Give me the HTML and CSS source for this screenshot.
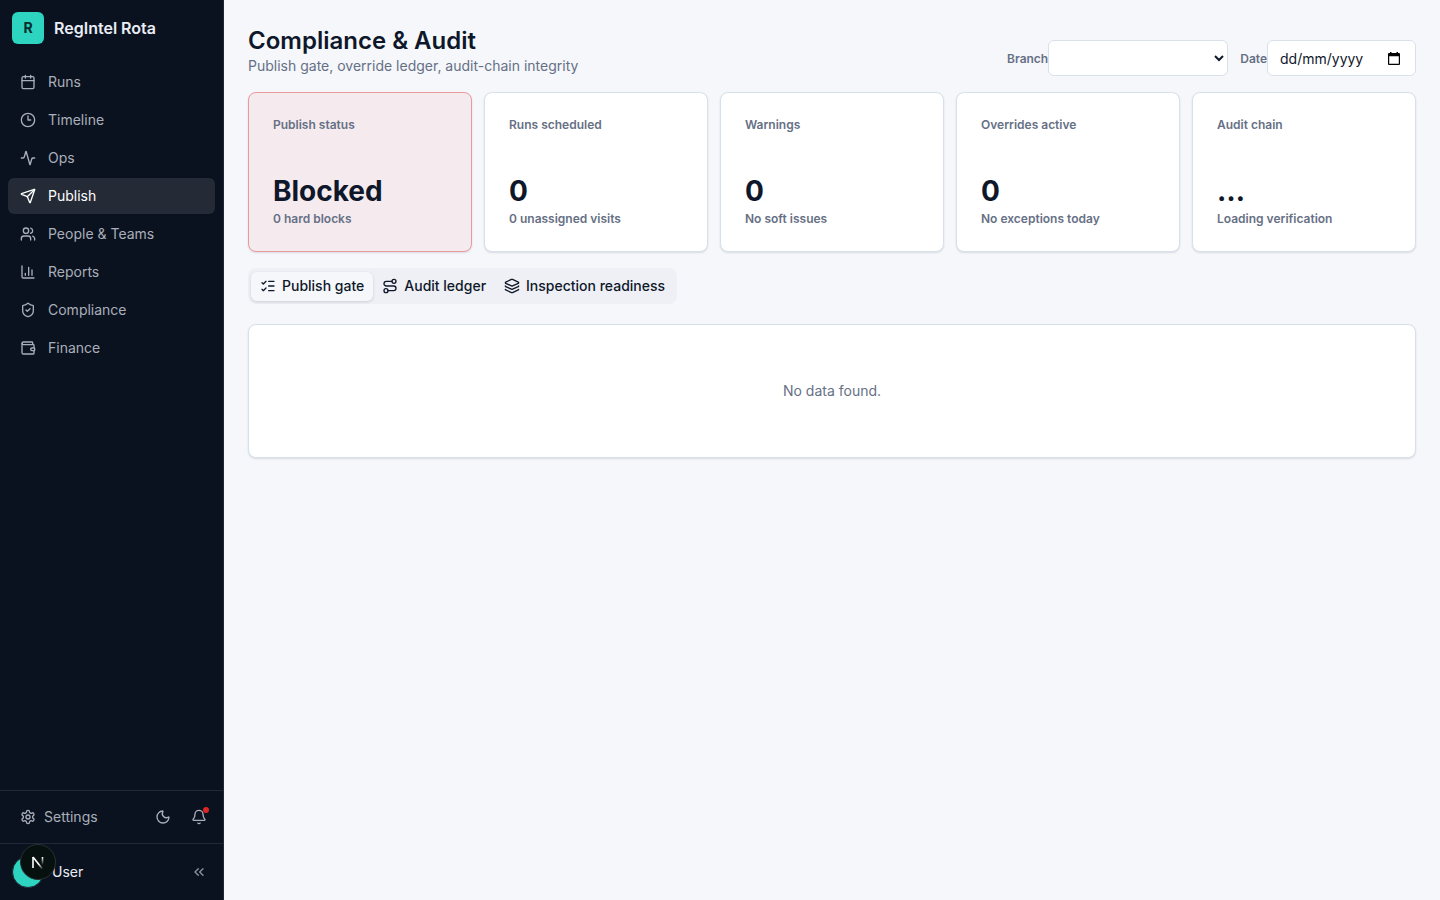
FILE: index.html
```html
<!DOCTYPE html>
<html lang="en-GB">
<head>
    <meta charset="UTF-8">
    <meta name="viewport" content="width=device-width, initial-scale=1.0">
    <title>RegIntel Rota - Compliance &amp; Audit</title>
    <link rel="stylesheet" href="styles.css">
</head>
<body>

    <div class="app">
        <aside class="sidebar">
            <div class="brand">
                <span class="brand-logo">R</span>
                <span class="brand-name">RegIntel Rota</span>
            </div>

            <nav class="nav">
                <a class="nav-item" href="#runs">
                    <svg class="icon" viewBox="0 0 24 24"><path d="M8 2v4M16 2v4"/><rect width="18" height="18" x="3" y="4" rx="2"/><path d="M3 10h18"/></svg>
                    Runs
                </a>
                <a class="nav-item" href="#timeline">
                    <svg class="icon" viewBox="0 0 24 24"><circle cx="12" cy="12" r="10"/><path d="M12 6v6h4"/></svg>
                    Timeline
                </a>
                <a class="nav-item" href="#ops">
                    <svg class="icon" viewBox="0 0 24 24"><path d="M22 12h-2.48a2 2 0 0 0-1.93 1.46l-2.35 8.36a.25.25 0 0 1-.48 0L9.24 2.18a.25.25 0 0 0-.48 0l-2.35 8.36A2 2 0 0 1 4.49 12H2"/></svg>
                    Ops
                </a>
                <a class="nav-item active" href="#publish">
                    <svg class="icon" viewBox="0 0 24 24"><path d="M14.536 21.686a.5.5 0 0 0 .937-.024l6.5-19a.496.496 0 0 0-.635-.635l-19 6.5a.5.5 0 0 0-.024.937l7.93 3.18a2 2 0 0 1 1.112 1.11z"/><path d="m21.854 2.147-10.94 10.939"/></svg>
                    Publish
                </a>
                <a class="nav-item" href="#people">
                    <svg class="icon" viewBox="0 0 24 24"><path d="M16 21v-2a4 4 0 0 0-4-4H6a4 4 0 0 0-4 4v2"/><circle cx="9" cy="7" r="4"/><path d="M22 21v-2a4 4 0 0 0-3-3.87M16 3.13a4 4 0 0 1 0 7.75"/></svg>
                    People &amp; Teams
                </a>
                <a class="nav-item" href="#reports">
                    <svg class="icon" viewBox="0 0 24 24"><path d="M3 3v16a2 2 0 0 0 2 2h16"/><path d="M18 17V9M13 17V5M8 17v-3"/></svg>
                    Reports
                </a>
                <a class="nav-item" href="#compliance">
                    <svg class="icon" viewBox="0 0 24 24"><path d="M20 13c0 5-3.5 7.5-7.66 8.95a1 1 0 0 1-.67-.01C7.5 20.5 4 18 4 13V6a1 1 0 0 1 1-1c2 0 4.5-1.2 6.24-2.72a1.17 1.17 0 0 1 1.52 0C14.51 3.81 17 5 19 5a1 1 0 0 1 1 1z"/><path d="m9 12 2 2 4-4"/></svg>
                    Compliance
                </a>
                <a class="nav-item" href="#finance">
                    <svg class="icon" viewBox="0 0 24 24"><path d="M19 7V4a1 1 0 0 0-1-1H5a2 2 0 0 0 0 4h15a1 1 0 0 1 1 1v4h-3a2 2 0 0 0 0 4h3a1 1 0 0 0 1-1v-2a1 1 0 0 0-1-1"/><path d="M3 5v14a2 2 0 0 0 2 2h15a1 1 0 0 0 1-1v-4"/></svg>
                    Finance
                </a>
            </nav>

            <div class="settings-row">
                <a class="settings-link" href="#settings">
                    <svg class="icon" viewBox="0 0 24 24"><path d="M12.22 2h-.44a2 2 0 0 0-2 2v.18a2 2 0 0 1-1 1.73l-.43.25a2 2 0 0 1-2 0l-.15-.08a2 2 0 0 0-2.73.73l-.22.38a2 2 0 0 0 .73 2.73l.15.1a2 2 0 0 1 1 1.72v.51a2 2 0 0 1-1 1.74l-.15.09a2 2 0 0 0-.73 2.73l.22.38a2 2 0 0 0 2.73.73l.15-.08a2 2 0 0 1 2 0l.43.25a2 2 0 0 1 1 1.73V20a2 2 0 0 0 2 2h.44a2 2 0 0 0 2-2v-.18a2 2 0 0 1 1-1.73l.43-.25a2 2 0 0 1 2 0l.15.08a2 2 0 0 0 2.73-.73l.22-.39a2 2 0 0 0-.73-2.73l-.15-.08a2 2 0 0 1-1-1.74v-.5a2 2 0 0 1 1-1.74l.15-.09a2 2 0 0 0 .73-2.73l-.22-.38a2 2 0 0 0-2.73-.73l-.15.08a2 2 0 0 1-2 0l-.43-.25a2 2 0 0 1-1-1.73V4a2 2 0 0 0-2-2z"/><circle cx="12" cy="12" r="3"/></svg>
                    Settings
                </a>
                <button class="icon-btn" aria-label="Toggle theme">
                    <svg class="icon" viewBox="0 0 24 24"><path d="M20.985 12.486a9 9 0 1 1-9.473-9.472c.405-.022.617.46.402.803a6 6 0 0 0 8.268 8.268c.344-.215.825-.004.803.401"/></svg>
                </button>
                <button class="icon-btn" aria-label="Notifications">
                    <svg class="icon" viewBox="0 0 24 24"><path d="M10.268 21a2 2 0 0 0 3.464 0"/><path d="M3.262 15.326A1 1 0 0 0 4 17h16a1 1 0 0 0 .74-1.673C19.41 13.956 18 12.499 18 8A6 6 0 0 0 6 8c0 4.499-1.411 5.956-2.738 7.326"/></svg>
                    <span class="dot"></span>
                </button>
            </div>

            <div class="user-row">
                <span class="avatar"></span>
                <span class="user-name">User</span>
                <button class="icon-btn dim" aria-label="Collapse sidebar">
                    <svg class="icon" viewBox="0 0 24 24"><path d="m11 17-5-5 5-5M18 17l-5-5 5-5"/></svg>
                </button>
                <button class="dev-badge" aria-label="Open dev tools">
                    <svg width="34" height="34" viewBox="0 0 34 34" fill="none">
                        <defs>
                            <linearGradient id="diag" x1="18" y1="19" x2="22" y2="24" gradientUnits="userSpaceOnUse">
                                <stop stop-color="#fff"/>
                                <stop offset="1" stop-color="#fff" stop-opacity="0"/>
                            </linearGradient>
                            <linearGradient id="stem" x1="21" y1="12" x2="21" y2="20" gradientUnits="userSpaceOnUse">
                                <stop stop-color="#fff"/>
                                <stop offset="1" stop-color="#fff" stop-opacity="0"/>
                            </linearGradient>
                        </defs>
                        <path d="M12 12l9.500 12" stroke="url(#diag)" stroke-width="1.6"/>
                        <path d="M12 23V12" stroke="#fff" stroke-width="1.6"/>
                        <path d="M21.500 12v8" stroke="url(#stem)" stroke-width="1.6"/>
                    </svg>
                </button>
            </div>
        </aside>

        <main class="main">
            <header class="page-header">
                <div>
                    <h1>Compliance &amp; Audit</h1>
                    <p class="subtitle">Publish gate, override ledger, audit-chain integrity</p>
                </div>
                <div class="filters">
                    <div class="field">
                        <label for="branch">Branch</label>
                        <select id="branch" class="control branch"></select>
                    </div>
                    <div class="field">
                        <label for="date">Date</label>
                        <div class="date-box">
                            <input id="date" class="control date" type="text" placeholder="dd/mm/yyyy">
                            <button class="date-btn" aria-label="Show date picker">
                                <svg width="12" height="13" viewBox="0 0 12 13"><path d="M2 0h1.500v1h5V0H10v1h1a1 1 0 0 1 1 1v10a1 1 0 0 1-1 1H1a1 1 0 0 1-1-1V2a1 1 0 0 1 1-1h1zM1.200 4.200v7.600h9.600V4.200z" fill="#000" fill-rule="evenodd"/></svg>
                            </button>
                        </div>
                    </div>
                </div>
            </header>

            <section class="stats">
                <div class="card stat blocked">
                    <div class="stat-label">Publish status</div>
                    <div class="stat-value">Blocked</div>
                    <div class="stat-note">0 hard blocks</div>
                </div>
                <div class="card stat">
                    <div class="stat-label">Runs scheduled</div>
                    <div class="stat-value">0</div>
                    <div class="stat-note">0 unassigned visits</div>
                </div>
                <div class="card stat">
                    <div class="stat-label">Warnings</div>
                    <div class="stat-value">0</div>
                    <div class="stat-note">No soft issues</div>
                </div>
                <div class="card stat">
                    <div class="stat-label">Overrides active</div>
                    <div class="stat-value">0</div>
                    <div class="stat-note">No exceptions today</div>
                </div>
                <div class="card stat">
                    <div class="stat-label">Audit chain</div>
                    <div class="stat-value">…</div>
                    <div class="stat-note">Loading verification</div>
                </div>
            </section>

            <div class="tabs" role="tablist">
                <button class="tab selected" role="tab" aria-selected="true">
                    <svg class="icon" viewBox="0 0 24 24"><path d="M13 5h8M13 12h8M13 19h8M3 17l2 2 4-4M3 7l2 2 4-4"/></svg>
                    Publish gate
                </button>
                <button class="tab" role="tab" aria-selected="false">
                    <svg class="icon" viewBox="0 0 24 24"><circle cx="6" cy="19" r="3"/><path d="M9 19h8.500a3.500 3.500 0 0 0 0-7h-11a3.500 3.500 0 0 1 0-7H15"/><circle cx="18" cy="5" r="3"/></svg>
                    Audit ledger
                </button>
                <button class="tab" role="tab" aria-selected="false">
                    <svg class="icon" viewBox="0 0 24 24"><path d="M12.830 2.180a2 2 0 0 0-1.660 0L2.600 6.080a1 1 0 0 0 0 1.830l8.580 3.910a2 2 0 0 0 1.660 0l8.580-3.900a1 1 0 0 0 0-1.830z"/><path d="M2 12a1 1 0 0 0 .58.91l8.600 3.910a2 2 0 0 0 1.650 0l8.580-3.900A1 1 0 0 0 22 12"/><path d="M2 17a1 1 0 0 0 .58.91l8.600 3.910a2 2 0 0 0 1.650 0l8.580-3.900A1 1 0 0 0 22 17"/></svg>
                    Inspection readiness
                </button>
            </div>

            <section class="card empty">No data found.</section>
        </main>
    </div>

</body>
</html>
```
FILE: styles.css
```css
* {
    box-sizing: border-box;
}

body {
    margin: 0;
    font-family: Inter, "Liberation Sans", sans-serif;
    font-size: 14px;
    line-height: 20px;
    color: #0f172a;
    background-color: #f5f7fb;
}

h1, p {
    margin: 0;
}

button, input, select {
    font: inherit;
    color: inherit;
}

a {
    color: inherit;
    text-decoration: none;
}

.app {
    display: flex;
    min-height: 100vh;
}

.icon {
    width: 16px;
    height: 16px;
    flex-shrink: 0;
    fill: none;
    stroke: currentColor;
    stroke-width: 2;
    stroke-linecap: round;
    stroke-linejoin: round;
}

/* sidebar */
.sidebar {
    width: 224px;
    flex-shrink: 0;
    display: flex;
    flex-direction: column;
    background-color: #0b121f;
    border-right: 1px solid #1f2937;
    color: #a9afba;
}

.brand {
    display: flex;
    align-items: center;
    gap: 10px;
    height: 56px;
    padding: 0 12px;
}

.brand-logo {
    display: flex;
    align-items: center;
    justify-content: center;
    width: 32px;
    height: 32px;
    border-radius: 6px;
    background-color: #2dd4bf;
    color: #042f2e;
    font-weight: 700;
}

.brand-name {
    font-size: 16px;
    font-weight: 600;
    color: #e9edf5;
}

.nav {
    flex: 1;
    display: flex;
    flex-direction: column;
    gap: 2px;
    padding: 8px;
}

.nav-item {
    display: flex;
    align-items: center;
    gap: 12px;
    height: 36px;
    padding: 0 12px;
    border-radius: 6px;
}

.nav-item:hover,
.nav-item.active {
    background-color: #242a36;
    color: #fff;
}

.settings-row,
.user-row {
    display: flex;
    align-items: center;
    border-top: 1px solid #1f2937;
    padding: 8px;
}

.settings-row {
    gap: 4px;
}

.settings-link {
    flex: 1;
    display: flex;
    align-items: center;
    gap: 8px;
    height: 36px;
    padding: 0 12px;
}

.icon-btn {
    position: relative;
    display: flex;
    align-items: center;
    justify-content: center;
    width: 32px;
    height: 32px;
    padding: 0;
    border: none;
    border-radius: 6px;
    background: none;
    cursor: pointer;
}

.dot {
    position: absolute;
    top: 6px;
    right: 6px;
    width: 6px;
    height: 6px;
    border-radius: 50%;
    background-color: #dc2626;
}

.user-row {
    position: relative;
    gap: 8px;
    height: 57px;
    padding-left: 12px;
}

.avatar {
    width: 32px;
    height: 32px;
    border: 1px solid #1f2937;
    border-radius: 50%;
    background-color: #2dd4bf;
}

.user-name {
    flex: 1;
    color: #e9edf5;
}

.dim {
    color: #8b929e;
}

/* floating dev tools button, sits over the avatar */
.dev-badge {
    position: absolute;
    left: 20px;
    top: 0;
    width: 36px;
    height: 36px;
    padding: 0;
    border: 1px solid #2b3031;
    border-radius: 50%;
    background-color: #05100f;
}

.dev-badge svg {
    display: block;
}

/* main */
.main {
    flex: 1;
    min-width: 0;
    padding: 24px;
}

.page-header {
    display: flex;
    align-items: flex-end;
    justify-content: space-between;
    padding-top: 2px;
    margin-bottom: 16px;
}

h1 {
    font-size: 24px;
    line-height: 30px;
    font-weight: 600;
}

.subtitle {
    color: #667085;
}

.filters {
    display: flex;
    gap: 12px;
}

.field {
    display: flex;
    align-items: center;
}

.field label,
.stat-label,
.stat-note {
    font-size: 12px;
    line-height: 16px;
    font-weight: 600;
    color: #667085;
}

.field label {
    padding-top: 2px;
}

.control {
    height: 36px;
    border: 1px solid #d8e1ea;
    border-radius: 6px;
    background-color: #fff;
}

.branch {
    width: 180px;
    padding: 0 8px;
}

.date-box {
    position: relative;
}

.date {
    display: block;
    width: 149px;
    padding: 0 36px 0 12px;
}

.date::placeholder {
    color: #0f172a;
}

/* picker button over the right end of the input */
.date-btn {
    position: absolute;
    top: 0;
    right: 12px;
    display: flex;
    align-items: center;
    justify-content: center;
    width: 20px;
    height: 36px;
    padding: 0;
    border: none;
    background: none;
    cursor: pointer;
}

.card {
    background-color: #fff;
    border: 1px solid #d8e1ea;
    border-radius: 8px;
    box-shadow: 0 1px 2px rgba(15, 23, 42, 0.12);
}

.stats {
    display: grid;
    grid-template-columns: repeat(5, 1fr);
    gap: 12px;
    margin-bottom: 16px;
}

.stat {
    padding: 24px;
}

.stat.blocked {
    background-color: #f5ebef;
    border-color: #e99a9e;
}

.stat-value {
    margin: 40px 0 2px;
    font-size: 28px;
    line-height: 36px;
    font-weight: 700;
}

.tabs {
    display: inline-flex;
    align-items: center;
    height: 36px;
    padding: 3px;
    border-radius: 8px;
    background-color: #eef0f5;
}

.tab {
    display: flex;
    align-items: center;
    gap: 6px;
    height: 29px;
    padding: 0 9px;
    border: none;
    border-radius: 6px;
    background: none;
    font-weight: 500;
    cursor: pointer;
}

.tab.selected {
    background-color: #f5f7fb;
    box-shadow: 0 1px 3px rgba(15, 23, 42, 0.16);
}

.empty {
    margin-top: 20px;
    padding: 56px 24px;
    text-align: center;
    color: #667085;
}
```
